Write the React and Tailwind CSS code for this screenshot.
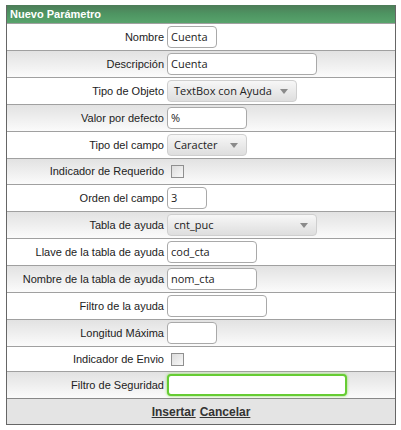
import React from "react";

function Input({ w, value = "", focus = false }) {
  return (
    <div
      className={
        "h-[22px] rounded-[4px] bg-white flex items-center px-[3px] text-[11px] whitespace-nowrap text-[#222] font-['Open_Sans',sans-serif] " +
        (focus
          ? "border-2 border-[#66cc33] shadow-[0_0_3px_#88dd55]"
          : "border border-[#a9a9a9]")
      }
      style={{ width: w }}
    >
      {value}
    </div>
  );
}

function Select({ w, value }) {
  return (
    <div
      className="h-[22px] rounded-[4px] border border-[#cfcfcf] bg-linear-to-b from-[#f7f7f7] to-[#dedede] flex items-center justify-between pl-[6px] pr-[8px] text-[11px] whitespace-nowrap text-[#222] font-['Open_Sans',sans-serif]"
      style={{ width: w }}
    >
      <span>{value}</span>
      <svg width="8" height="5" viewBox="0 0 8 5">
        <path d="M0 0 L8 0 L4 5 Z" fill="#8a8a8a" />
      </svg>
    </div>
  );
}

function Checkbox() {
  return (
    <div className="ml-[4px] w-[13px] h-[13px] border border-[#8f8f8f] bg-linear-to-br from-[#dcdcdc] to-[#f8f8f8]" />
  );
}

function Row({ label, children, alt, h = "h-[27px]" }) {
  return (
    <div
      className={
        "flex items-center border-t border-[#a0a0a0] " +
        h +
        " " +
        (alt ? "bg-linear-to-b from-[#e2e2e2] to-[#fbfbfb]" : "bg-white")
      }
    >
      <div className="w-[159px] pr-[2px] text-right text-[11px] text-[#222] font-['Liberation_Sans',sans-serif]">
        {label}
      </div>
      <div className="pl-[1px] flex items-center">{children}</div>
    </div>
  );
}

export default function App() {
  return (
    <div className="w-[401px] h-[430px] bg-white pt-[5px] pl-[6px]">
      <div className="w-[390px] border border-[#666] border-t-0">
        <div className="h-[18px] bg-linear-to-b from-[#4d7c58] via-[#4e9562] to-[#58a36c] text-white font-bold text-[11px] font-['Liberation_Sans',sans-serif] flex items-center pl-[3px]">
          Nuevo Parámetro
        </div>
        <Row label="Nombre">
          <Input w={50} value="Cuenta" />
        </Row>
        <Row label="Descripción" alt>
          <Input w={150} value="Cuenta" />
        </Row>
        <Row label="Tipo de Objeto">
          <Select w={130} value="TextBox con Ayuda" />
        </Row>
        <Row label="Valor por defecto" alt>
          <Input w={80} value="%" />
        </Row>
        <Row label="Tipo del campo">
          <Select w={80} value="Caracter" />
        </Row>
        <Row label="Indicador de Requerido" alt h="h-[26px]">
          <Checkbox />
        </Row>
        <Row label="Orden del campo">
          <Input w={40} value="3" />
        </Row>
        <Row label="Tabla de ayuda" alt>
          <Select w={150} value="cnt_puc" />
        </Row>
        <Row label="Llave de la tabla de ayuda">
          <Input w={90} value="cod_cta" />
        </Row>
        <Row label="Nombre de la tabla de ayuda" alt>
          <Input w={90} value="nom_cta" />
        </Row>
        <Row label="Filtro de la ayuda">
          <Input w={100} value="" />
        </Row>
        <Row label="Longitud Máxima" alt>
          <Input w={50} value="" />
        </Row>
        <Row label="Indicador de Envio" h="h-[25px]">
          <Checkbox />
        </Row>
        <Row label="Filtro de Seguridad" alt>
          <Input w={180} value="" focus />
        </Row>
        <div className="h-[26px] border-t border-[#888] bg-[#e4e4e4] flex items-center justify-center gap-[4px] text-[12px] font-bold text-[#333] font-['Liberation_Sans',sans-serif]">
          <span className="underline">Insertar</span>
          <span className="underline">Cancelar</span>
        </div>
      </div>
    </div>
  );
}
